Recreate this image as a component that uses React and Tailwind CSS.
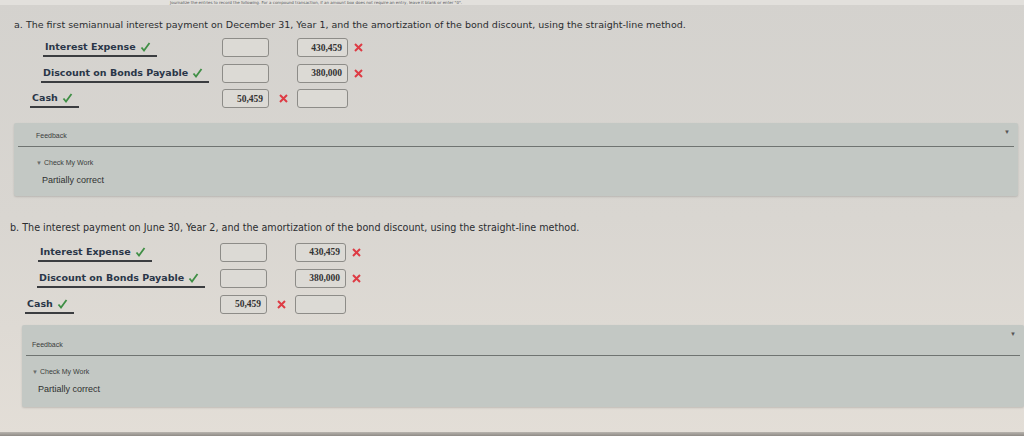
import React from "react";

const sections = [
  {
    letter: "a.",
    title:
      "The first semiannual interest payment on December 31, Year 1, and the amortization of the bond discount, using the straight-line method.",
    titleIndent: "pl-[14px]",
    titleSize: "text-[9.5px]",
    topGap: "pt-[14px]",
    rowsGap: "pt-[4px]",
    rowH: "h-[25.5px]",
    boxStart: "w-[222px]",
    rows: [
      { label: "Interest Expense", indent: "pl-[43px]", debit: "", credit: "430,459", debitX: false, creditX: true },
      { label: "Discount on Bonds Payable", indent: "pl-[41px]", debit: "", credit: "380,000", debitX: false, creditX: true },
      { label: "Cash", indent: "pl-[30px]", debit: "50,459", credit: "", debitX: true, creditX: false },
    ],
    panel: "ml-[14px] mr-[6px] mt-[11px] h-[73px]",
    panelPad: "pl-[22px]",
    fbTop: "pt-[8px]",
    checkTop: "pt-[11px]",
  },
  {
    letter: "b.",
    title:
      "The interest payment on June 30, Year 2, and the amortization of the bond discount, using the straight-line method.",
    titleIndent: "pl-[10px]",
    titleSize: "text-[9.6px]",
    topGap: "pt-[26px]",
    rowsGap: "pt-[6px]",
    rowH: "h-[26px]",
    boxStart: "w-[220px]",
    rows: [
      { label: "Interest Expense", indent: "pl-[38px]", debit: "", credit: "430,459", debitX: false, creditX: true },
      { label: "Discount on Bonds Payable", indent: "pl-[37px]", debit: "", credit: "380,000", debitX: false, creditX: true },
      { label: "Cash", indent: "pl-[25px]", debit: "50,459", credit: "", debitX: true, creditX: false },
    ],
    panel: "ml-[22px] mr-0 mt-[7px] h-[82px]",
    panelPad: "pl-[10px]",
    fbTop: "pt-[15px]",
    checkTop: "pt-[11px]",
  },
];

function Check() {
  return (
    <svg width="11" height="10" viewBox="0 0 11 10" className="ml-[4px] inline-block">
      <path d="M1.5 5.5 L4 8.5 L9.5 1" stroke="#3f8f45" strokeWidth="1.8" fill="none" />
    </svg>
  );
}

function Cross() {
  return (
    <svg width="9" height="9" viewBox="0 0 9 9" className="shrink-0">
      <path d="M1 1 L8 8 M8 1 L1 8" stroke="#de3b44" strokeWidth="2" />
    </svg>
  );
}

function Box({ value, wide }) {
  return (
    <div
      className={`${wide ? "w-[51px]" : "w-[47px]"} h-[19px] rounded-[3px] border border-[#8d8c88] bg-[#dcdad5] flex items-center justify-end pr-[5px] text-[9.5px] font-bold text-[#333] font-['Liberation_Serif',serif]`}
    >
      {value}
    </div>
  );
}

function Row({ row, boxStart, rowH }) {
  return (
    <div className={`flex items-center ${rowH}`}>
      <div className={`${boxStart} ${row.indent} shrink-0`}>
        <span className="inline-flex items-center border-b-2 border-[#3b3d40] pl-[2px] pr-[6px] pb-[1px] mb-[6px] text-[9.5px] font-bold text-[#2a3648] font-['DejaVu_Sans',sans-serif]">
          {row.label}
          <Check />
        </span>
      </div>
      <Box value={row.debit} />
      <div className="w-[28px] flex items-center justify-center">
        {row.debitX && <Cross />}
      </div>
      <Box value={row.credit} wide />
      <div className="w-[20px] flex items-center justify-center">
        {row.creditX && <Cross />}
      </div>
    </div>
  );
}

function Feedback({ s }) {
  return (
    <div className={`${s.panel} bg-[#c3c8c4] rounded-[2px] shadow-[0_1px_2px_rgba(0,0,0,0.15)] relative font-['Liberation_Sans',sans-serif]`}>
      <div className={`${s.panelPad} ${s.fbTop} text-[7px] text-[#3a3d3c]`}>Feedback</div>
      <span className="absolute right-[8px] top-[5px] text-[6px] text-[#555]">▼</span>
      <div className="mx-[4px] mt-[5px] border-b border-[#6f7471]" />
      <div className={`${s.panelPad} ${s.checkTop} text-[7px] text-[#3a3d3c] flex items-center`}>
        <span className="text-[6px] text-[#6a6e6c] mr-[2px]">▼</span>Check My Work
      </div>
      <div className={`${s.panelPad} pt-[5px] text-[9px] text-[#2f3130]`}>
        <span className="ml-[6px]">Partially correct</span>
      </div>
    </div>
  );
}

function Section({ s }) {
  return (
    <div>
      <div className={`${s.titleIndent} ${s.topGap} ${s.titleSize} leading-[12px] text-[#2b2d30] font-['DejaVu_Sans',sans-serif] whitespace-nowrap`}>
        {s.letter} {s.title}
      </div>
      <div className={s.rowsGap}>
        {s.rows.map((row, i) => (
          <Row key={i} row={row} boxStart={s.boxStart} rowH={s.rowH} />
        ))}
      </div>
      <Feedback s={s} />
    </div>
  );
}

export default function App() {
  return (
    <div className="w-[1024px] h-[436px] overflow-hidden bg-gradient-to-b from-[#d4d2ce] via-[#d9d6d1] to-[#e3ded7] relative">
      <div className="h-[5px] bg-[#e2e0dc] pl-[170px] text-[4px] leading-[5px] text-[#55575a] font-['DejaVu_Sans',sans-serif] whitespace-nowrap">
        Journalize the entries to record the following. For a compound transaction, if an amount box does not require an entry, leave it blank or enter "0".
      </div>
      {sections.map((s, i) => (
        <Section key={i} s={s} />
      ))}
      <div className="absolute left-0 right-0 bottom-0 h-[4px] bg-gradient-to-b from-[#b8b4ae] to-[#8f8b86]" />
    </div>
  );
}
